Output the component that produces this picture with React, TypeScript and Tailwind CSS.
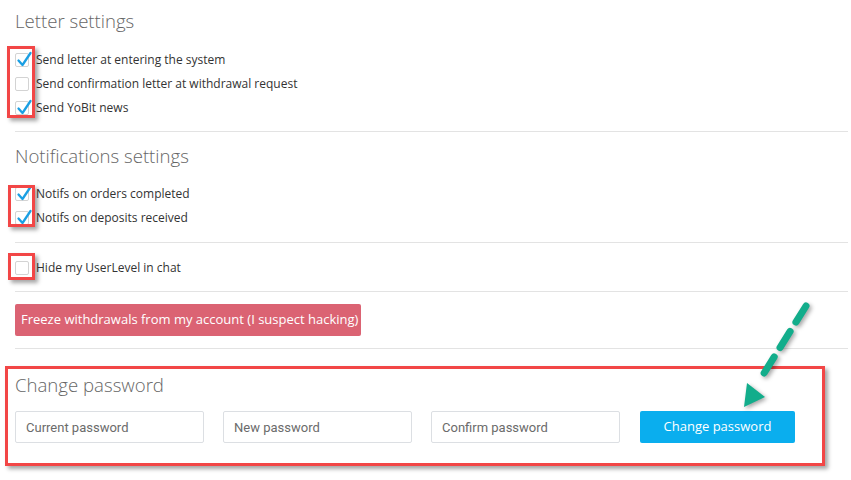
import { FunctionComponent } from 'react';

const letterOptions = [
  { label: 'Send letter at entering the system', checked: true },
  { label: 'Send confirmation letter at withdrawal request', checked: false },
  { label: 'Send YoBit news', checked: true },
];

const notifOptions = [
  { label: 'Notifs on orders completed', checked: true },
  { label: 'Notifs on deposits received', checked: true },
];

const Check: FunctionComponent<{ checked: boolean }> = ({ checked }) => (
  <span className="relative inline-block w-[14px] h-[14px] border border-[#d3d3d3] rounded-[2px] bg-white shrink-0">
    {checked && (
      <svg
        className="absolute -left-px -top-[3px] overflow-visible"
        width="18"
        height="18"
        viewBox="0 0 18 18"
      >
        <path
          d="M3.5 9.5 L7.5 14 L15.5 2"
          fill="none"
          stroke="#1a9fe3"
          strokeWidth="2.3"
          strokeLinecap="round"
          strokeLinejoin="round"
        />
      </svg>
    )}
  </span>
);

const Row: FunctionComponent<{ label: string; checked: boolean }> = ({ label, checked }) => (
  <label className="flex items-center h-6 gap-[7px] text-[12px] text-[#333]">
    <Check checked={checked} />
    <span>{label}</span>
  </label>
);

const Title: FunctionComponent<{ children: string }> = ({ children }) => (
  <h2 className="text-[18.6px] leading-6 font-light text-[#666]">{children}</h2>
);

const RedBox: FunctionComponent<{ className: string }> = ({ className }) => (
  <div
    className={`absolute border-[3px] border-[#f24646] shadow-[3px_3px_4px_rgba(0,0,0,0.35)] pointer-events-none ${className}`}
  />
);

const inputClass =
  'w-[189px] h-8 border border-[#dcdfe3] rounded-[2px] px-[10px] text-[13px] text-[#555] placeholder:text-[#6b6b6b] outline-none font-["Roboto",sans-serif]';

export default function App() {
  return (
    <div className="relative w-[851px] h-[480px] bg-white overflow-hidden font-['Open_Sans',sans-serif]">
      <div className="pl-[15px] pr-[3px]">
        <section className="pt-[9px] pb-[11px]">
          <Title>Letter settings</Title>
          <div className="mt-[15px] flex flex-col">
            {letterOptions.map((o) => (
              <Row key={o.label} {...o} />
            ))}
          </div>
        </section>
        <section className="border-t border-[#e3e3e3] pt-3 pb-3">
          <Title>Notifications settings</Title>
          <div className="mt-[14px] flex flex-col">
            {notifOptions.map((o) => (
              <Row key={o.label} {...o} />
            ))}
          </div>
        </section>
        <section className="border-t border-[#e3e3e3] pt-[13px] pb-[11px]">
          <Row label="Hide my UserLevel in chat" checked={false} />
        </section>
        <section className="border-t border-[#e3e3e3] pt-3 pb-3">
          <button className="h-8 w-[346px] rounded-[2px] bg-[#db6373] text-white text-[13px] text-left pl-[6px]">
            Freeze withdrawals from my account (I suspect hacking)
          </button>
        </section>
        <section className="border-t border-[#e3e3e3] pt-[24px]">
          <Title>Change password</Title>
          <div className="mt-[14px] flex gap-[19px]">
            <input className={inputClass} placeholder="Current password" />
            <input className={inputClass} placeholder="New password" />
            <input className={inputClass} placeholder="Confirm password" />
            <button className="ml-px h-8 w-[155px] rounded-[2px] bg-[#0aaeee] text-white text-[13px]">
              Change password
            </button>
          </div>
        </section>
      </div>

      <RedBox className="left-[7px] top-[46px] w-[28px] h-[72px]" />
      <RedBox className="left-[8px] top-[185px] w-[27px] h-[42px]" />
      <RedBox className="left-[8px] top-[253px] w-[27px] h-[27px]" />
      <RedBox className="left-[5px] top-[366px] w-[820px] h-[100px]" />

      <svg
        className="absolute left-0 top-0 pointer-events-none drop-shadow-[2px_2px_2px_rgba(0,0,0,0.35)]"
        width="851"
        height="480"
      >
        <path
          d="M806 306 L761 378"
          stroke="#12ad8b"
          strokeWidth="7"
          strokeLinecap="round"
          strokeDasharray="19 11"
          fill="none"
        />
        <polygon points="744,407 747,383 765,397" fill="#12ad8b" />
      </svg>
    </div>
  );
}
